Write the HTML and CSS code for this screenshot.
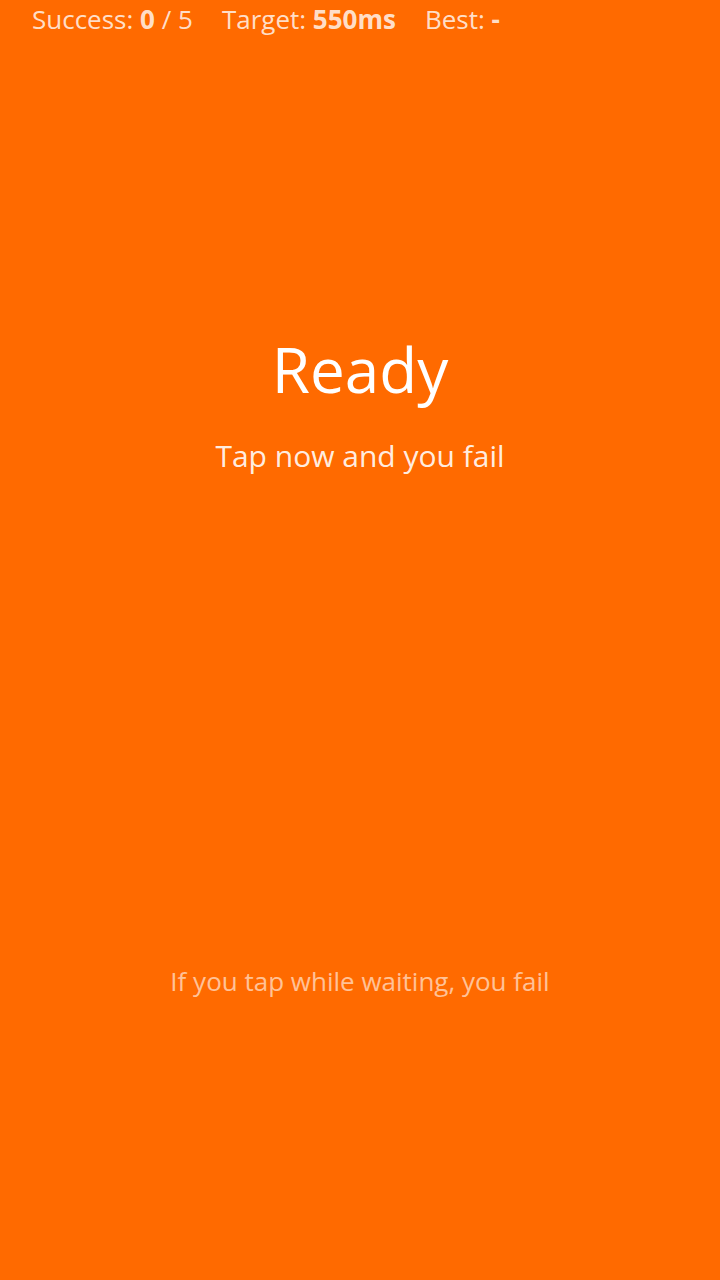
FILE: index.html
```html
<!DOCTYPE html>
<html lang="en">
<head>
<meta charset="utf-8">
<title>Reaction Test</title>
<link rel="stylesheet" href="styles.css">
</head>
<body>
<div class="screen">
  <header class="stats">
    <span class="stat">Success: <b>0</b> / 5</span>
    <span class="stat">Target: <b>550ms</b></span>
    <span class="stat">Best: <b>-</b></span>
  </header>
  <main class="center">
    <h1 class="title">Ready</h1>
    <p class="subtitle">Tap now and you fail</p>
  </main>
  <footer class="hint">If you tap while waiting, you fail</footer>
</div>
</body>
</html>
```
FILE: styles.css
```css
html, body {
  margin: 0;
  padding: 0;
  height: 100%;
}
body {
  background: #ff6a00;
  font-family: "Open Sans", "Noto Sans", sans-serif;
  color: #fff;
}
.screen {
  height: 1280px;
  display: flex;
  flex-direction: column;
}
.stats {
  display: flex;
  gap: 29px;
  padding: 0 32px;
  height: 38px;
  align-items: center;
  font-size: 26px;
  color: rgba(255, 255, 255, 0.8);
}
.stats b {
  font-weight: 700;
}
.center {
  display: flex;
  flex-direction: column;
  align-items: center;
  padding-top: 291px;
}
.title {
  margin: 0;
  font-size: 62px;
  font-weight: 400;
  line-height: 80px;
}
.subtitle {
  margin: 27px 0 0;
  font-size: 30px;
  line-height: 40px;
  color: rgba(255, 255, 255, 0.9);
}
.hint {
  margin-top: 487px;
  text-align: center;
  font-size: 26px;
  line-height: 36px;
  color: rgba(255, 255, 255, 0.6);
}
```
